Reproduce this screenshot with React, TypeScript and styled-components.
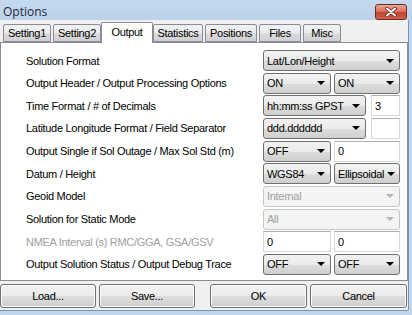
import styled, { createGlobalStyle } from "styled-components";

const GlobalStyle = createGlobalStyle`
  html, body {
    margin: 0;
    padding: 0;
    background: #bfd5ec;
  }
  body {
    font-family: "Liberation Sans", Arial, sans-serif;
    font-size: 11px;
    letter-spacing: -0.3px;
    color: #000;
  }
`;

const Window = styled.div`
  width: 412px;
  height: 315px;
  display: flex;
  flex-direction: column;
  overflow: hidden;
  background: #bfd5ec;
`;

const TitleBar = styled.div`
  height: 20px;
  flex: none;
  display: flex;
  align-items: center;
  justify-content: space-between;
  padding-left: 3px;
  background: linear-gradient(#c6d9ee, #bcd2ea);
`;

const Title = styled.span`
  font-family: "Open Sans", "Noto Sans", sans-serif;
  font-size: 12px;
  letter-spacing: 0;
  color: #1e2a3a;
  margin-top: 2px;
`;

const CloseButton = styled.div`
  width: 30px;
  height: 14px;
  margin-right: 5px;
  margin-top: 3px;
  border: 1px solid #6b2a22;
  border-radius: 3px;
  background: linear-gradient(#e9a99a 0%, #d9725f 45%, #c2442f 55%, #d1604a 100%);
  display: flex;
  align-items: center;
  justify-content: center;
`;

const Frame = styled.div`
  flex: 1;
  display: flex;
`;

const Client = styled.div`
  width: 408px;
  height: 291px;
  display: flex;
  flex-direction: column;
  background: #f0f0f0;
  border-bottom: 1px solid #7d93ad;
  box-sizing: border-box;
`;

const RightFrame = styled.div`
  flex: 1;
  border-left: 1px solid #7d93ad;
  background: #c0d6ee;
  height: 290px;
`;

const TabStrip = styled.div`
  height: 22px;
  display: flex;
  align-items: flex-end;
  padding-left: 3px;
  position: relative;
  z-index: 1;
`;

const Tab = styled.div<{ $w: number; $active?: boolean }>`
  width: ${(p) => p.$w}px;
  height: ${(p) => (p.$active ? 21 : 18)}px;
  margin: ${(p) => (p.$active ? "0 0 -1px -2px" : "0 2px 0 0")};
  box-sizing: border-box;
  border: 1px solid #898c95;
  border-bottom: ${(p) => (p.$active ? "none" : "1px solid #898c95")};
  border-radius: 2px 2px 0 0;
  background: ${(p) =>
    p.$active ? "#ffffff" : "linear-gradient(#f2f2f2 0%, #ebebeb 50%, #dddddd 51%, #cfcfcf 100%)"};
  display: flex;
  align-items: ${(p) => (p.$active ? "flex-start" : "center")};
  padding-top: ${(p) => (p.$active ? "3px" : "0")};
  justify-content: center;
  font-size: 11px;
  color: #000;
`;

const Panel = styled.div`
  height: 239px;
  box-sizing: border-box;
  border: 1px solid #898c95;
  background: #ffffff;
  padding: 7px 7px 0 25px;
  display: grid;
  grid-auto-rows: 21px;
  row-gap: 1.67px;
`;

const Row = styled.div`
  display: grid;
  grid-template-columns: 1fr 137px;
  align-items: center;
`;

const Label = styled.span<{ $disabled?: boolean }>`
  color: ${(p) => (p.$disabled ? "#a0a0a0" : "#000")};
  white-space: nowrap;
  font-size: 11px;
`;

const Controls = styled.div<{ $layout: "full" | "half" | "wide" }>`
  display: grid;
  height: 21px;
  grid-template-columns: ${(p) =>
    p.$layout === "full" ? "1fr" : p.$layout === "half" ? "68px 66px" : "103px 29px"};
  column-gap: ${(p) => (p.$layout === "wide" ? 5 : 3)}px;
`;

const ComboBox = styled.div<{ $disabled?: boolean }>`
  box-sizing: border-box;
  height: 21px;
  border: 1px solid ${(p) => (p.$disabled ? "#c4c7ca" : "#707070")};
  border-radius: 3px;
  background: ${(p) =>
    p.$disabled
      ? "#f4f4f4"
      : "linear-gradient(#f2f2f2 0%, #ebebeb 50%, #dddddd 51%, #cfcfcf 100%)"};
  display: flex;
  align-items: center;
  justify-content: space-between;
  gap: 3px;
  padding: 0 5px 0 3px;
  color: ${(p) => (p.$disabled ? "#a0a0a0" : "#000")};
  font-size: 11px;
  white-space: nowrap;
  overflow: hidden;
`;

const Arrow = styled.span<{ $disabled?: boolean }>`
  width: 0;
  height: 0;
  border-left: 4px solid transparent;
  border-right: 4px solid transparent;
  border-top: 4px solid ${(p) => (p.$disabled ? "#b4b4b4" : "#000")};
  flex: none;
`;

const Edit = styled.div`
  box-sizing: border-box;
  height: 21px;
  border: 1px solid #d5d8dc;
  border-top-color: #abadb3;
  background: #fff;
  display: flex;
  align-items: center;
  padding-left: 3px;
  font-size: 11px;
  color: #000;
`;

const ButtonRow = styled.div`
  display: flex;
  padding-top: 3px;
  padding-right: 1px;
  gap: 3px;
`;

const Spacer = styled.div`
  flex: 1;
`;

const Button = styled.div<{ $w: number }>`
  width: ${(p) => p.$w}px;
  height: 24px;
  box-sizing: border-box;
  border: 1px solid #707070;
  border-radius: 3px;
  background: linear-gradient(#f2f2f2 0%, #ebebeb 50%, #dddddd 51%, #cfcfcf 100%);
  box-shadow: inset 0 0 0 1px #fcfcfc;
  display: flex;
  align-items: center;
  justify-content: center;
  font-size: 11px;
  color: #000;
`;

type Ctrl = { kind: "combo" | "edit"; text: string; disabled?: boolean };

type RowDef = {
  label: string;
  layout: "full" | "half" | "wide";
  disabled?: boolean;
  controls: Ctrl[];
};

const rows: RowDef[] = [
  { label: "Solution Format", layout: "full", controls: [{ kind: "combo", text: "Lat/Lon/Height" }] },
  {
    label: "Output Header / Output Processing Options",
    layout: "half",
    controls: [{ kind: "combo", text: "ON" }, { kind: "combo", text: "ON" }],
  },
  {
    label: "Time Format / # of Decimals",
    layout: "wide",
    controls: [{ kind: "combo", text: "hh:mm:ss GPST" }, { kind: "edit", text: "3" }],
  },
  {
    label: "Latitude Longitude Format / Field Separator",
    layout: "wide",
    controls: [{ kind: "combo", text: "ddd.dddddd" }, { kind: "edit", text: "" }],
  },
  {
    label: "Output Single if Sol Outage / Max Sol Std (m)",
    layout: "half",
    controls: [{ kind: "combo", text: "OFF" }, { kind: "edit", text: "0" }],
  },
  {
    label: "Datum / Height",
    layout: "half",
    controls: [{ kind: "combo", text: "WGS84" }, { kind: "combo", text: "Ellipsoidal" }],
  },
  { label: "Geoid Model", layout: "full", controls: [{ kind: "combo", text: "Internal", disabled: true }] },
  {
    label: "Solution for Static Mode",
    layout: "full",
    controls: [{ kind: "combo", text: "All", disabled: true }],
  },
  {
    label: "NMEA Interval (s) RMC/GGA, GSA/GSV",
    layout: "half",
    disabled: true,
    controls: [{ kind: "edit", text: "0" }, { kind: "edit", text: "0" }],
  },
  {
    label: "Output Solution Status / Output Debug Trace",
    layout: "half",
    controls: [{ kind: "combo", text: "OFF" }, { kind: "combo", text: "OFF" }],
  },
];

const tabs = [
  { name: "Setting1", w: 48 },
  { name: "Setting2", w: 48 },
  { name: "Output", w: 52, active: true },
  { name: "Statistics", w: 50 },
  { name: "Positions", w: 52 },
  { name: "Files", w: 42 },
  { name: "Misc", w: 38 },
];

function CloseIcon() {
  return (
    <svg width="14" height="10" viewBox="0 0 14 10">
      <path d="M3 1.5 L11 8.5 M11 1.5 L3 8.5" stroke="#5a2018" strokeWidth="3.6" strokeLinecap="round" />
      <path d="M3 1.5 L11 8.5 M11 1.5 L3 8.5" stroke="#ffffff" strokeWidth="2" strokeLinecap="round" />
    </svg>
  );
}

export default function App() {
  return (
    <Window>
      <GlobalStyle />
      <TitleBar>
        <Title>Options</Title>
        <CloseButton>
          <CloseIcon />
        </CloseButton>
      </TitleBar>
      <Frame>
        <Client>
          <TabStrip>
            {tabs.map((t) => (
              <Tab key={t.name} $w={t.w} $active={t.active}>
                {t.name}
              </Tab>
            ))}
          </TabStrip>
          <Panel>
            {rows.map((r) => (
              <Row key={r.label}>
                <Label $disabled={r.disabled}>{r.label}</Label>
                <Controls $layout={r.layout}>
                  {r.controls.map((c, i) =>
                    c.kind === "combo" ? (
                      <ComboBox key={i} $disabled={c.disabled}>
                        {c.text}
                        <Arrow $disabled={c.disabled} />
                      </ComboBox>
                    ) : (
                      <Edit key={i}>{c.text}</Edit>
                    )
                  )}
                </Controls>
              </Row>
            ))}
          </Panel>
          <ButtonRow>
            <Button $w={96}>Load...</Button>
            <Button $w={96}>Save...</Button>
            <Spacer />
            <Button $w={97}>OK</Button>
            <Button $w={97}>Cancel</Button>
          </ButtonRow>
        </Client>
        <RightFrame />
      </Frame>
    </Window>
  );
}
